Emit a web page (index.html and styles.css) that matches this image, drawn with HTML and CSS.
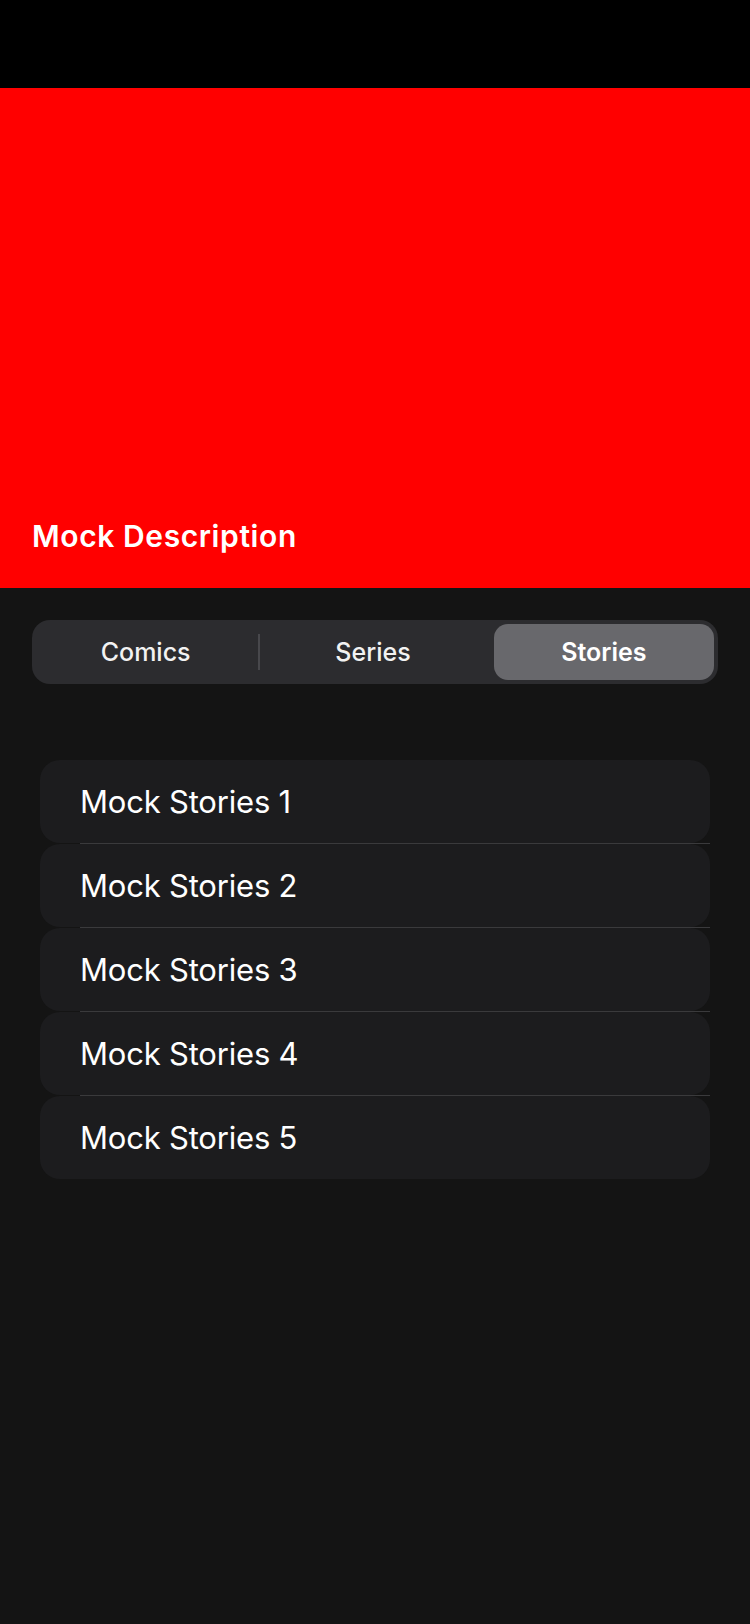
FILE: index.html
```html
<!DOCTYPE html>
<html lang="en">
<head>
<meta charset="utf-8">
<title>Mock</title>
<link rel="stylesheet" href="styles.css">
</head>
<body>
<div class="status-bar"></div>
<header class="hero">
  <h1 class="hero-title">Mock Description</h1>
</header>
<main class="content">
  <div class="segmented">
    <div class="segment segment-first">Comics</div>
    <div class="segment">Series</div>
    <div class="segment segment-selected"><span class="pill">Stories</span></div>
  </div>
  <ul class="story-list">
    <li class="story-row"><div class="story-card">Mock Stories 1</div><div class="story-sep"></div></li>
    <li class="story-row"><div class="story-card">Mock Stories 2</div><div class="story-sep"></div></li>
    <li class="story-row"><div class="story-card">Mock Stories 3</div><div class="story-sep"></div></li>
    <li class="story-row"><div class="story-card">Mock Stories 4</div><div class="story-sep"></div></li>
    <li class="story-row"><div class="story-card">Mock Stories 5</div></li>
  </ul>
</main>
</body>
</html>
```
FILE: styles.css
```css
html, body {
  margin: 0;
  padding: 0;
}
body {
  background: #141414;
  min-height: 1624px;
  font-family: Inter, "Noto Sans", "Liberation Sans", sans-serif;
  color: #ffffff;
}
.status-bar {
  height: 88px;
  background: #000000;
}
.hero {
  height: 500px;
  background: #ff0000;
  display: flex;
  flex-direction: column;
  justify-content: flex-end;
  padding: 0 32px 35px;
  box-sizing: border-box;
}
.hero-title {
  margin: 0;
  font-size: 30px;
  line-height: 34px;
  font-weight: 600;
  letter-spacing: 0.6px;
}
.content {
  padding: 32px 32px 0;
}
.segmented {
  height: 64px;
  box-sizing: border-box;
  background: #2c2c2f;
  border-radius: 18px;
  padding: 4px 4px 4px 0;
  display: grid;
  grid-template-columns: repeat(3, 1fr);
}
.segment {
  display: flex;
  align-items: center;
  justify-content: center;
  font-size: 25px;
  font-weight: 500;
  color: #f2f2f2;
  position: relative;
}
.segment-first::after {
  content: "";
  position: absolute;
  right: -1px;
  top: 10px;
  bottom: 10px;
  width: 2px;
  background: #48484c;
}
.segment-selected {
  padding-left: 7px;
}
.pill {
  flex: 1;
  align-self: stretch;
  display: flex;
  align-items: center;
  justify-content: center;
  background: #68686c;
  border-radius: 14px;
  font-weight: 600;
  color: #ffffff;
}
.story-list {
  list-style: none;
  margin: 76px 8px 0 8px;
  padding: 0;
}
.story-card {
  height: 83px;
  background: #1c1c1e;
  border-radius: 20px;
  display: flex;
  align-items: center;
  padding-left: 40px;
  font-size: 31px;
  font-weight: 400;
  color: #ffffff;
  letter-spacing: -0.2px;
}
.story-sep {
  height: 1px;
  margin-left: 40px;
  background: #3a3a3c;
}
```
